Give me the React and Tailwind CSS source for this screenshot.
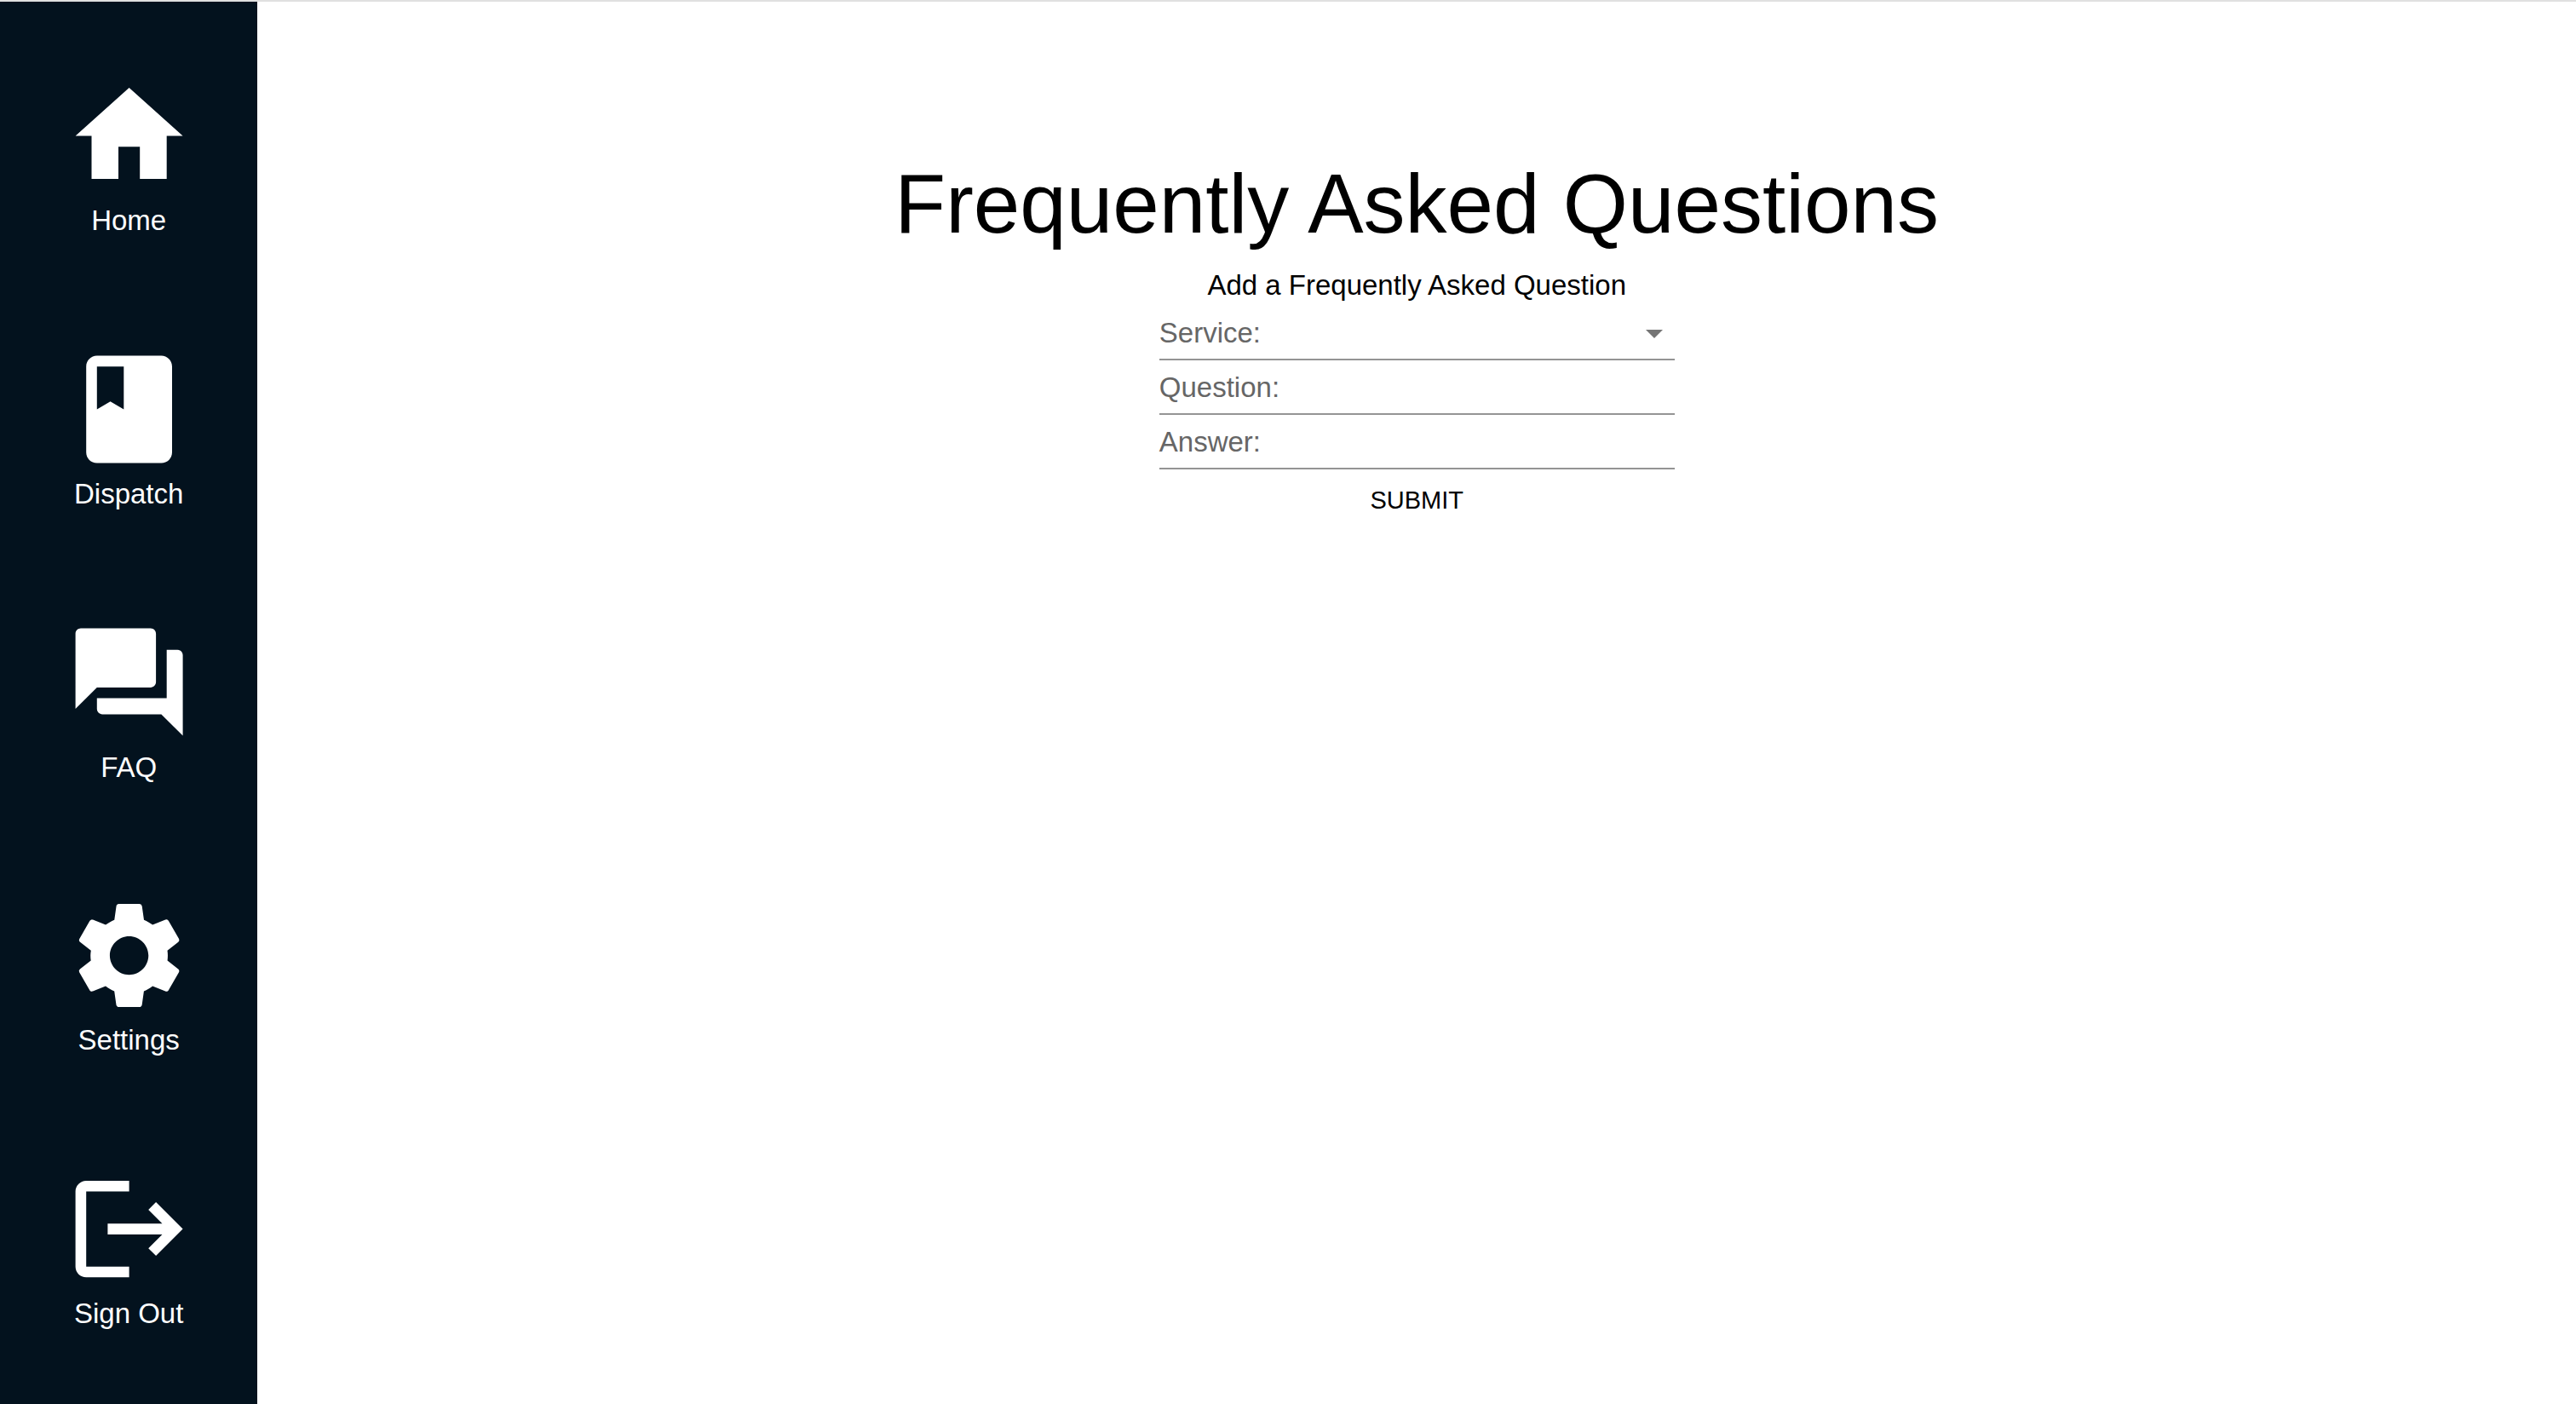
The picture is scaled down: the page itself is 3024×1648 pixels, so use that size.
import { MdHome, MdBook, MdQuestionAnswer, MdSettings, MdLogout, MdArrowDropDown } from "react-icons/md";

const links = [
  { label: "Home", Icon: MdHome },
  { label: "Dispatch", Icon: MdBook },
  { label: "FAQ", Icon: MdQuestionAnswer },
  { label: "Settings", Icon: MdSettings },
  { label: "Sign Out", Icon: MdLogout },
];

function Field({ id, label, children }) {
  return (
    <div className="flex h-16 items-start border-b-2 border-[#949494]">
      <label htmlFor={id} className="pt-3.5 text-[#666666]">
        {label}
      </label>
      {children}
    </div>
  );
}

export default function App() {
  return (
    <div className="flex min-h-screen border-t-2 border-[#e0e0e0] bg-white font-['Liberation_Sans',sans-serif] text-[33px] leading-[36px] text-black">
      <nav className="flex w-1/10 flex-col justify-between bg-[#03121e] pt-[82px] pb-[88px] text-white">
        {links.map(({ label, Icon }) => (
          <a key={label} href="#" className="flex flex-col items-center gap-1.5">
            <Icon className="h-auto w-1/2" />
            <span>{label}</span>
          </a>
        ))}
      </nav>
      <main className="flex flex-1 flex-col items-center pt-[181px]">
        <h1 className="text-[98px] leading-[112px]">Frequently Asked Questions</h1>
        <form className="flex w-2/9 flex-col" onSubmit={(e) => e.preventDefault()}>
          <h2 className="pt-[22px] pb-1.5 text-center">Add a Frequently Asked Question</h2>
          <Field id="service" label="Service:">
            <select id="service" className="h-full min-w-0 flex-1 appearance-none bg-transparent outline-none" />
            <MdArrowDropDown className="pointer-events-none mt-2 size-12 text-[#757575]" />
          </Field>
          <Field id="question" label="Question:">
            <input id="question" type="text" className="h-full min-w-0 flex-1 outline-none" />
          </Field>
          <Field id="answer" label="Answer:">
            <input id="answer" type="text" className="h-full min-w-0 flex-1 outline-none" />
          </Field>
          <button type="submit" className="mt-[18px] self-center px-4 text-[29px] uppercase">
            Submit
          </button>
        </form>
      </main>
    </div>
  );
}
